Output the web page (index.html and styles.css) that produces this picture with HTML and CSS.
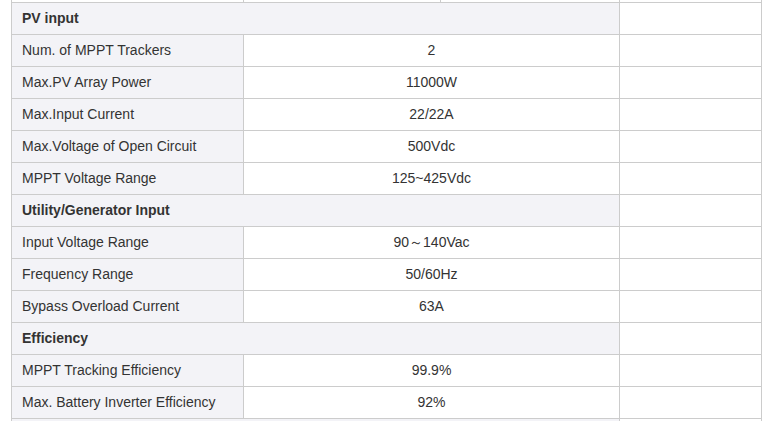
FILE: index.html
```html
<!DOCTYPE html>
<html>
<head>
<meta charset="utf-8">
<link rel="stylesheet" href="styles.css">
</head>
<body>
<div class="wrap">
<table class="spec">
<colgroup><col class="c1"><col class="c2"><col class="c3"></colgroup>
<tbody>
<tr class="prev"><td></td><td class="split"><span></span></td><td></td></tr>
<tr class="sec"><td colspan="2">PV input</td><td class="blank"></td></tr>
<tr><td class="k">Num. of MPPT Trackers</td><td class="v">2</td><td class="blank"></td></tr>
<tr><td class="k">Max.PV Array Power</td><td class="v">11000W</td><td class="blank"></td></tr>
<tr><td class="k">Max.Input Current</td><td class="v">22/22A</td><td class="blank"></td></tr>
<tr><td class="k">Max.Voltage of Open Circuit</td><td class="v">500Vdc</td><td class="blank"></td></tr>
<tr><td class="k">MPPT Voltage Range</td><td class="v">125~425Vdc</td><td class="blank"></td></tr>
<tr class="sec"><td colspan="2">Utility/Generator Input</td><td class="blank"></td></tr>
<tr><td class="k">Input Voltage Range</td><td class="v">90～140Vac</td><td class="blank"></td></tr>
<tr><td class="k">Frequency Range</td><td class="v">50/60Hz</td><td class="blank"></td></tr>
<tr><td class="k">Bypass Overload Current</td><td class="v">63A</td><td class="blank"></td></tr>
<tr class="sec"><td colspan="2">Efficiency</td><td class="blank"></td></tr>
<tr><td class="k">MPPT Tracking Efficiency</td><td class="v">99.9%</td><td class="blank"></td></tr>
<tr><td class="k">Max. Battery Inverter Efficiency</td><td class="v">92%</td><td class="blank"></td></tr>
<tr class="sec"><td colspan="2"></td><td class="blank"></td></tr>
</tbody>
</table>
</div>
</body>
</html>
```
FILE: styles.css
```css
html, body {
  margin: 0;
  padding: 0;
  background: #fff;
  overflow: hidden;
}
.wrap {
  padding-left: 11px;
}
.spec {
  border-collapse: collapse;
  table-layout: fixed;
  width: 750px;
  margin-top: -30px;
  font-family: "Liberation Sans", Arial, sans-serif;
  font-size: 14px;
  color: #333;
}
.c1 { width: 232px; }
.c2 { width: 376px; }
.c3 { width: 142px; }
.spec td {
  border: 1px solid #cccccc;
  height: 31px;
  padding: 0 10px 2px;
  box-sizing: border-box;
  line-height: 16px;
  vertical-align: middle;
}
.spec tr { height: 32px; }
.prev td { background: #fff; }
.prev td.split { padding: 0; position: relative; }
.prev td.split span {
  position: absolute;
  left: 196px;
  top: 0;
  bottom: 0;
  border-left: 1px solid #cccccc;
}
.sec td {
  background: #f3f3f7;
  font-weight: bold;
  color: #333;
}
.sec td.blank { background: #fff; }
.k { background: #f3f3f7; }
.v { text-align: center; background: #fff; }
.blank { background: #fff; }
```
